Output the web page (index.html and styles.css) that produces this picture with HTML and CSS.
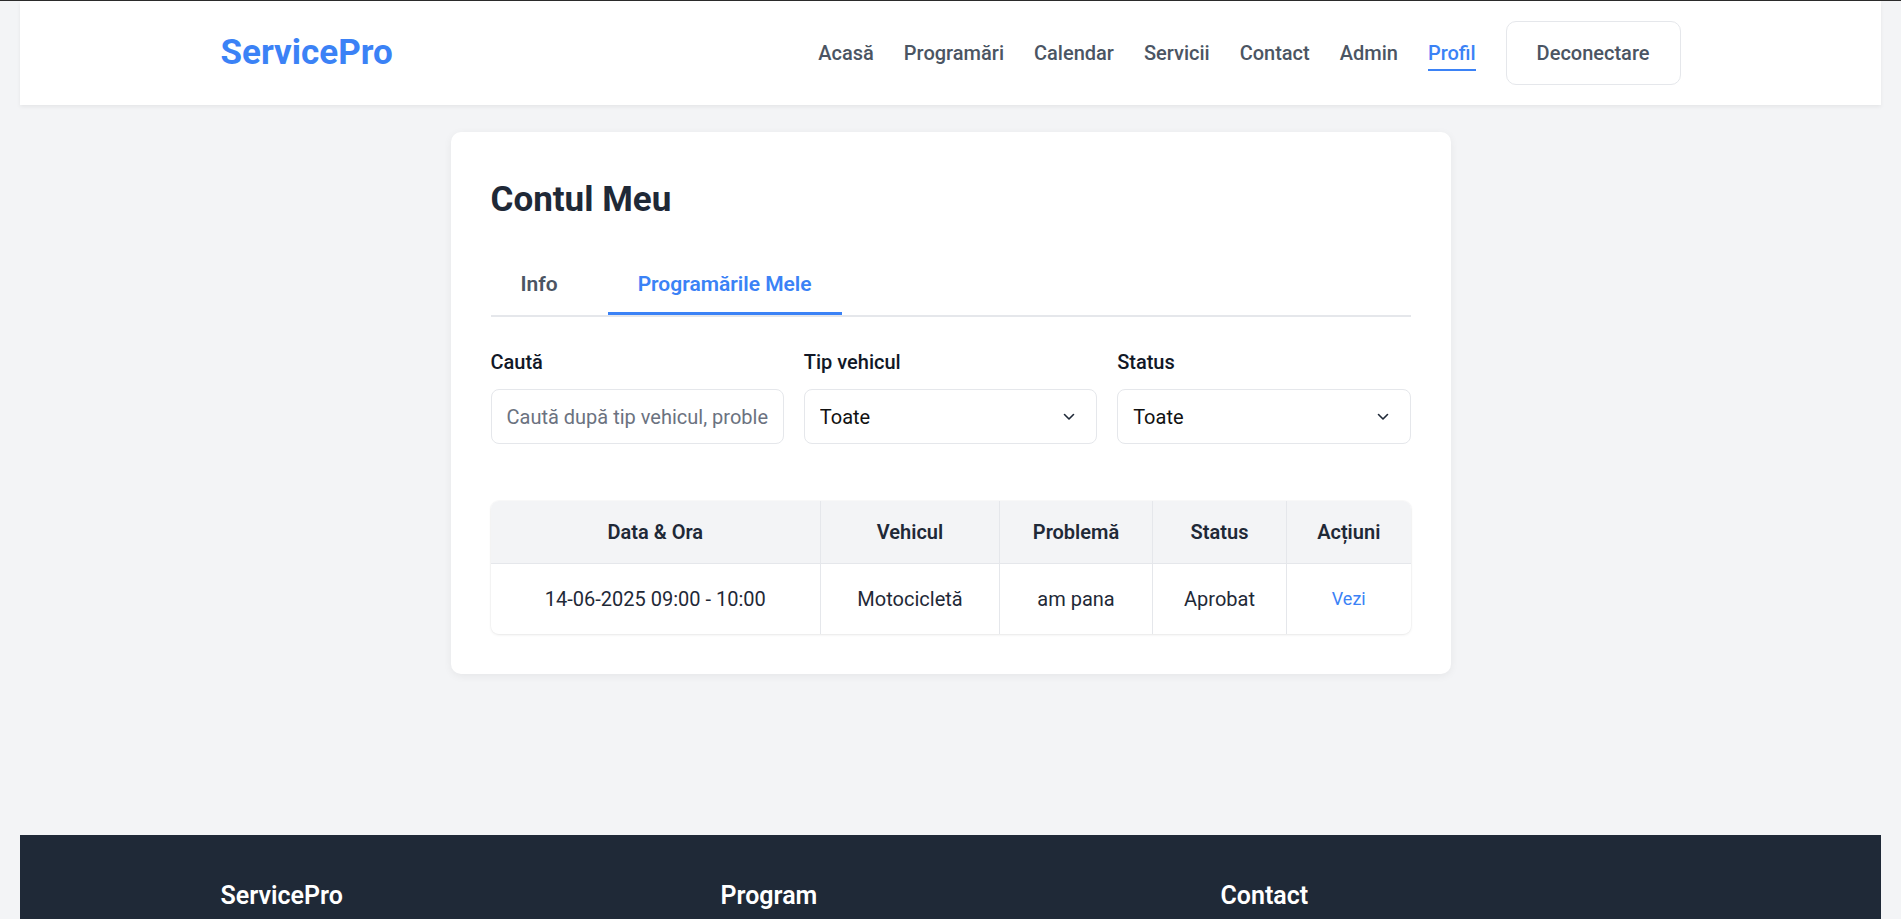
FILE: index.html
```html
<!DOCTYPE html>
<html lang="ro">
<head>
<meta charset="utf-8">
<title>ServicePro - Contul Meu</title>
<link rel="stylesheet" href="styles.css">
</head>
<body>
<header class="site-header">
  <div class="header-inner">
    <a class="logo" href="#">ServicePro</a>
    <nav class="nav">
      <a class="nav-link" href="#">Acasă</a>
      <a class="nav-link" href="#">Programări</a>
      <a class="nav-link" href="#">Calendar</a>
      <a class="nav-link" href="#">Servicii</a>
      <a class="nav-link" href="#">Contact</a>
      <a class="nav-link" href="#">Admin</a>
      <a class="nav-link active" href="#">Profil</a>
      <button class="logout-btn" type="button">Deconectare</button>
    </nav>
  </div>
</header>

<main class="main">
  <section class="card">
    <h1 class="card-title">Contul Meu</h1>
    <div class="tabs">
      <button class="tab" type="button">Info</button>
      <button class="tab active" type="button">Programările Mele</button>
    </div>

    <div class="filters">
      <div class="field">
        <label class="field-label" for="search">Caută</label>
        <input class="control" id="search" type="text" placeholder="Caută după tip vehicul, problemă sau status">
      </div>
      <div class="field">
        <label class="field-label" for="vehicle">Tip vehicul</label>
        <div class="select-wrap">
          <select class="control select" id="vehicle">
            <option>Toate</option>
            <option>Autoturism</option>
            <option>Motocicletă</option>
          </select>
          <svg class="chevron" width="12" height="8" viewBox="0 0 12 8" aria-hidden="true"><path d="M1.5 1.5 6 6l4.5-4.5" fill="none" stroke="#1f2937" stroke-width="1.6" stroke-linecap="round" stroke-linejoin="round"/></svg>
        </div>
      </div>
      <div class="field">
        <label class="field-label" for="status">Status</label>
        <div class="select-wrap">
          <select class="control select" id="status">
            <option>Toate</option>
            <option>În așteptare</option>
            <option>Aprobat</option>
          </select>
          <svg class="chevron" width="12" height="8" viewBox="0 0 12 8" aria-hidden="true"><path d="M1.5 1.5 6 6l4.5-4.5" fill="none" stroke="#1f2937" stroke-width="1.6" stroke-linecap="round" stroke-linejoin="round"/></svg>
        </div>
      </div>
    </div>

    <div class="table-wrap">
      <table class="table">
        <thead>
          <tr>
            <th class="col-date">Data &amp; Ora</th>
            <th class="col-vehicle">Vehicul</th>
            <th class="col-problem">Problemă</th>
            <th class="col-status">Status</th>
            <th class="col-actions">Acțiuni</th>
          </tr>
        </thead>
        <tbody>
          <tr>
            <td>14-06-2025 09:00 - 10:00</td>
            <td>Motocicletă</td>
            <td>am pana</td>
            <td>Aprobat</td>
            <td><a class="view-link" href="#">Vezi</a></td>
          </tr>
        </tbody>
      </table>
    </div>
  </section>
</main>

<footer class="site-footer">
  <div class="footer-inner">
    <h3 class="footer-title">ServicePro</h3>
    <h3 class="footer-title">Program</h3>
    <h3 class="footer-title">Contact</h3>
  </div>
</footer>
</body>
</html>
```

FILE: styles.css
```css
* {
  box-sizing: border-box;
}

html {
  height: 100%;
  overflow: hidden;
}

body {
  margin: 0;
  padding: 0 20px;
  height: 919px;
  overflow: hidden;
  display: flex;
  flex-direction: column;
  background: #f3f4f6;
  border-top: 1px solid #2b2b2b;
  font-family: Roboto, "Liberation Sans", Arial, sans-serif;
  color: #1f2937;
}

/* Header */
.site-header {
  flex: 0 0 104px;
  background: #ffffff;
  box-shadow: 0 2px 4px rgba(0, 0, 0, 0.06);
  position: relative;
  z-index: 1;
}

.header-inner {
  max-width: 1460px;
  height: 100%;
  margin: 0 auto;
  display: flex;
  align-items: center;
  justify-content: space-between;
}

.logo {
  font-size: 35px;
  font-weight: 700;
  color: #3b82f6;
  text-decoration: none;
  line-height: 1.2;
}

.nav {
  display: flex;
  align-items: center;
  gap: 30px;
}

.nav-link {
  font-size: 20px;
  line-height: 24px;
  font-weight: 500;
  color: #4b5563;
  text-decoration: none;
  padding: 6px 0 4px;
  border-bottom: 2px solid transparent;
}

.nav-link.active {
  color: #3b82f6;
  border-bottom-color: #3b82f6;
}

.logout-btn {
  font-family: inherit;
  font-size: 20px;
  line-height: 24px;
  font-weight: 500;
  color: #4b5563;
  background: #ffffff;
  border: 1px solid #e5e7eb;
  border-radius: 10px;
  padding: 19px 30px;
  cursor: pointer;
}

/* Main */
.main {
  flex: 1 1 auto;
  padding-top: 27px;
}

.card {
  max-width: 1000px;
  margin: 0 auto;
  background: #ffffff;
  border-radius: 10px;
  padding: 40px;
  box-shadow: 0 2px 8px rgba(0, 0, 0, 0.06);
}

.card-title {
  margin: 0 0 28px;
  font-size: 35px;
  line-height: 56px;
  font-weight: 700;
  color: #1f2937;
}

.tabs {
  display: flex;
  gap: 20px;
  border-bottom: 2px solid #e5e7eb;
}

.tab {
  font-family: inherit;
  font-size: 21px;
  line-height: 25px;
  font-weight: 600;
  color: #4b5563;
  background: none;
  border: none;
  border-bottom: 3px solid transparent;
  padding: 16px 30px 15px;
  cursor: pointer;
}

.tab.active {
  color: #3b82f6;
  border-bottom-color: #3b82f6;
}

/* Filters */
.filters {
  margin-top: 33px;
  display: grid;
  grid-template-columns: repeat(3, 1fr);
  gap: 20px;
}

.field {
  display: flex;
  flex-direction: column;
}

.field-label {
  font-size: 20px;
  line-height: 24px;
  font-weight: 500;
  color: #111827;
  margin-bottom: 15px;
}

.control {
  width: 100%;
  height: 55px;
  padding: 0 15px;
  font-family: inherit;
  font-size: 20px;
  color: #111111;
  background: #ffffff;
  border: 1px solid #e5e7eb;
  border-radius: 8px;
  outline: none;
}

.control::placeholder {
  color: #6b7280;
}

.select-wrap {
  position: relative;
}

.select {
  appearance: none;
  -webkit-appearance: none;
  cursor: pointer;
}

.chevron {
  position: absolute;
  right: 22px;
  top: 50%;
  margin-top: -4px;
  pointer-events: none;
}

/* Table */
.table-wrap {
  margin-top: 57px;
  border-radius: 8px;
  overflow: hidden;
  box-shadow: 0 1px 3px rgba(0, 0, 0, 0.08), 0 0 0 1px rgba(0, 0, 0, 0.02);
}

.table {
  width: 100%;
  border-collapse: collapse;
  table-layout: fixed;
}

.table th,
.table td {
  text-align: center;
  border-right: 1px solid #e5e7eb;
  font-size: 20px;
  line-height: 24px;
}

.table th:last-child,
.table td:last-child {
  border-right: none;
}

.table th {
  background: #f3f4f6;
  font-weight: 600;
  color: #1f2937;
  padding: 19px 12px;
  border-bottom: 1px solid #e5e7eb;
}

.table td {
  padding: 23px 12px;
  color: #1f2937;
  font-weight: 400;
}

.col-date { width: 330px; }
.col-vehicle { width: 179px; }
.col-problem { width: 153px; }
.col-status { width: 134px; }
.col-actions { width: auto; }

.view-link {
  color: #3b82f6;
  text-decoration: none;
  font-size: 18px;
  vertical-align: 1px;
}

/* Footer */
.site-footer {
  flex: 0 0 84px;
  background: #1f2937;
  color: #ffffff;
}

.footer-inner {
  max-width: 1460px;
  margin: 0 auto;
  padding-top: 46px;
  display: grid;
  grid-template-columns: repeat(3, 1fr);
  gap: 40px;
}

.footer-title {
  margin: 0;
  font-size: 25px;
  line-height: 30px;
  font-weight: 600;
}
```
